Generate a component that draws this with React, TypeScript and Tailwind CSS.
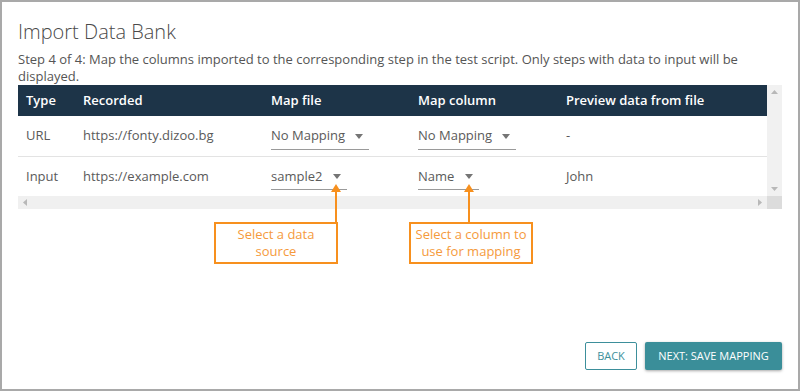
import React from "react";

const cols = "grid grid-cols-[57px_188px_147px_148px_1fr] [&>div]:pl-2";

const Select = ({ value, width }: { value: string; width: string }) => (
  <div className={`flex items-center justify-between border-b border-[#9a9a9a] pb-[3px] pr-[6px] ${width}`}>
    <span>{value}</span>
    <svg width="8" height="5" viewBox="0 0 8 5">
      <path d="M0 0h8L4 5z" fill="#757575" />
    </svg>
  </div>
);

const Callout = ({ left, arrowX, lines }: { left: string; arrowX: string; lines: string[] }) => (
  <div className={`absolute top-[182px] ${left} w-[124px]`}>
    <div className="relative h-[38px]">
      <div className={`absolute ${arrowX} top-0 flex flex-col items-center`}>
        <svg width="10" height="8" viewBox="0 0 10 8">
          <path d="M5 0L10 8H0z" fill="#f7901e" />
        </svg>
        <div className="w-[2px] h-[30px] bg-[#f7901e]" />
      </div>
    </div>
    <div className="h-[42px] border-2 border-[#f7901e] bg-white flex flex-col items-center justify-center text-[13px] leading-[17px] text-[#f59a3c]">
      {lines.map((l) => (
        <span key={l}>{l}</span>
      ))}
    </div>
  </div>
);

export default function App() {
  return (
    <div
      className="relative w-[800px] h-[391px] border-2 border-[#a9a9a9] bg-white px-4 pt-[16px] flex flex-col text-[#5a5a5a] overflow-hidden"
      style={{ fontFamily: '"Open Sans", "Noto Sans", sans-serif' }}
    >
      <h1 className="text-[20px] leading-[28px] font-light text-[#4a4a4a]">Import Data Bank</h1>
      <p className="mt-[5px] pr-[20px] text-[13px] leading-[17px] text-[#555]">
        Step 4 of 4: Map the columns imported to the corresponding step in the test script. Only steps with data to input will be
        displayed.
      </p>

      <div className="flex">
        <div className="flex-1">
          <div className={`${cols} h-[31px] bg-[#1d3448] text-white font-semibold text-[13px] items-center`}>
            <div>Type</div>
            <div>Recorded</div>
            <div>Map file</div>
            <div>Map column</div>
            <div>Preview data from file</div>
          </div>
          <div className={`${cols} h-[41px] items-center text-[13px] border-b border-[#e3e3e3]`}>
            <div>URL</div>
            <div>https://fonty.dizoo.bg</div>
            <div className="pt-[4px]">
              <Select value="No Mapping" width="w-[98px]" />
            </div>
            <div className="pt-[4px]">
              <Select value="No Mapping" width="w-[98px]" />
            </div>
            <div>-</div>
          </div>
          <div className={`${cols} h-[39px] items-center text-[13px]`}>
            <div>Input</div>
            <div>https://example.com</div>
            <div className="pt-[4px]">
              <Select value="sample2" width="w-[76px]" />
            </div>
            <div className="pt-[4px]">
              <Select value="Name" width="w-[61px]" />
            </div>
            <div>John</div>
          </div>
        </div>
        <div className="w-[15px] bg-[#f1f1f1] flex flex-col items-center justify-between py-[5px]">
          <svg width="7" height="4" viewBox="0 0 7 4">
            <path d="M3.5 0L7 4H0z" fill="#b8b8b8" />
          </svg>
          <svg width="7" height="4" viewBox="0 0 7 4">
            <path d="M0 0h7L3.5 4z" fill="#b8b8b8" />
          </svg>
        </div>
      </div>
      <div className="flex h-[13px]">
        <div className="flex-1 bg-[#f0f0f0] flex items-center justify-between px-[5px]">
          <svg width="4" height="7" viewBox="0 0 4 7">
            <path d="M4 0v7L0 3.5z" fill="#b8b8b8" />
          </svg>
          <svg width="4" height="7" viewBox="0 0 4 7">
            <path d="M0 0v7L4 3.5z" fill="#b8b8b8" />
          </svg>
        </div>
        <div className="w-[15px] bg-[#dcdcdc]" />
      </div>

      <div className="mt-auto mb-[19px] flex justify-end gap-2">
        <button className="h-[28px] w-[52px] border border-[#3d8f9b] rounded-[2px] text-[11px] text-[#3d8f9b] bg-white">
          BACK
        </button>
        <button className="h-[28px] w-[137px] rounded-[2px] bg-[#3a8e99] text-[11px] text-white font-medium shadow-[0_1px_3px_rgba(0,0,0,0.35)]">
          NEXT: SAVE MAPPING
        </button>
      </div>

      <Callout left="left-[212px]" arrowX="left-[117px]" lines={["Select a data", "source"]} />
      <Callout left="left-[407px]" arrowX="left-[55px]" lines={["Select a column to", "use for mapping"]} />
    </div>
  );
}
